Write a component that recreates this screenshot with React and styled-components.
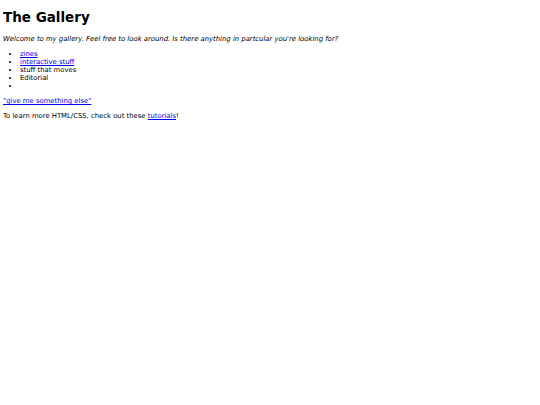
import React from "react";
import styled, { createGlobalStyle } from "styled-components";

const Global = createGlobalStyle`
  html, body { background: #ffffff; }
  body {
    margin: 3px;
    font-family: "DejaVu Sans", Verdana, sans-serif;
    font-size: 6.85px;
    line-height: 8px;
    color: #000;
  }
`;

const Title = styled.h1`
  font-size: 13.5px;
  line-height: 16px;
  font-weight: bold;
  margin: 6px 0 10px;
`;

const Para = styled.p`
  margin: 7px 0;
  font-style: ${(p) => (p.$italic ? "italic" : "normal")};
`;

const List = styled.ul`
  margin: 7px 0 7px;
  padding-left: 17px;
  list-style: disc;
`;

const Item = styled.li``;

const Link = styled.a`
  color: #0000ee;
  text-decoration: underline;
`;

export default function App() {
  return (
    <>
      <Global />
      <Title>The Gallery</Title>
      <Para $italic>
        Welcome to my gallery. Feel free to look around. Is there anything in partcular you're looking for?
      </Para>
      <List>
        <Item><Link href="#">zines</Link></Item>
        <Item><Link href="#">interactive stuff</Link></Item>
        <Item>stuff that moves</Item>
        <Item>Editorial</Item>
        <Item></Item>
      </List>
      <Para><Link href="#">"give me something else"</Link></Para>
      <Para>
        To learn more HTML/CSS, check out these <Link href="#">tutorials</Link>!
      </Para>
    </>
  );
}
